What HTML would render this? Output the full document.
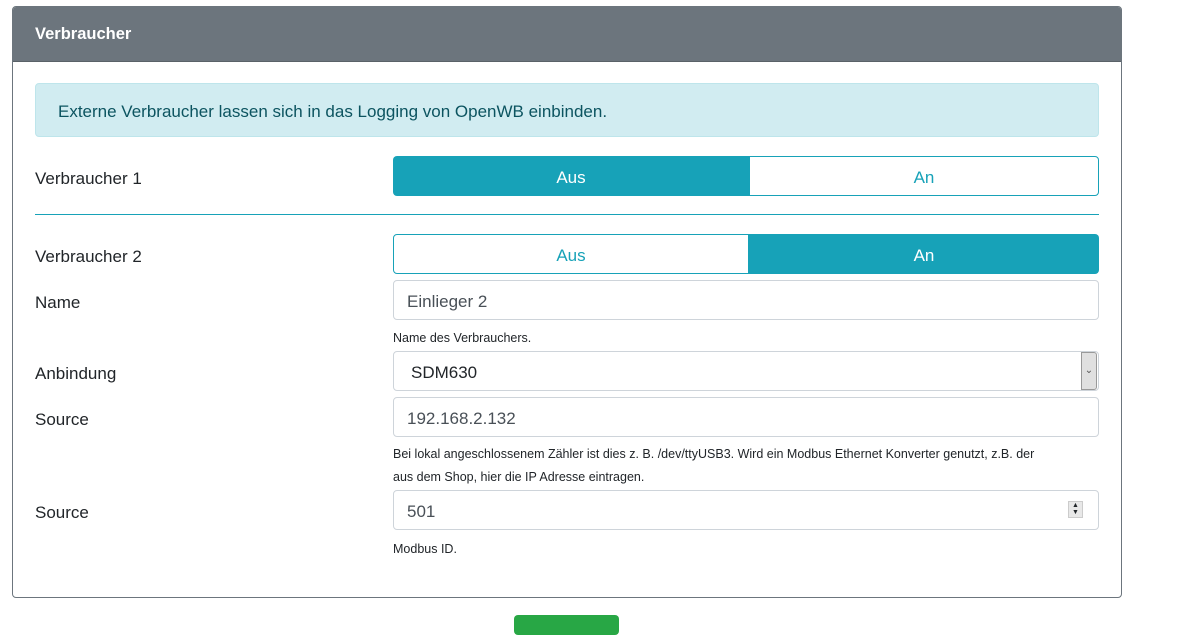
<!DOCTYPE html>
<html><head><style>
body{margin:0;width:1178px;height:627px;background:#fff;font-family:"Liberation Sans",sans-serif;color:#212529;position:relative;overflow:hidden}
.a{position:absolute}
.card{left:12px;top:6px;width:1108px;height:590px;border:1px solid #6c757d;border-radius:4px}
.hdr{left:13px;top:7px;width:1108px;height:54px;background:#6c757d;border-radius:3px 3px 0 0;border-bottom:1px solid #5a6268}
.lbl{font-size:17px;left:35px}
.inp{left:393px;height:40px;border:1px solid #ced4da;border-radius:4px;font-size:17px;line-height:42px;padding-left:13px;box-sizing:border-box;width:706px;color:#495057}
.sm{left:393px;font-size:12.5px;color:#212529}
.btn{height:40px;line-height:43px;text-align:center;font-size:17px;box-sizing:border-box;width:356px}
</style></head><body>
<div class="a card"></div>
<div class="a hdr"></div>
<div class="a" style="left:35px;top:25px;color:#fff;font-weight:bold;font-size:16.5px">Verbraucher</div>
<div class="a" style="left:35px;top:83px;width:1064px;height:54px;background:#d1ecf1;border:1px solid #bee5eb;border-radius:4px;box-sizing:border-box;color:#0c5460;font-size:17px;line-height:56px;padding-left:22px">Externe Verbraucher lassen sich in das Logging von OpenWB einbinden.</div>
<div class="a lbl" style="top:169px">Verbraucher 1</div>
<div class="a btn" style="left:393px;top:156px;background:#17a2b8;color:#fff;border-radius:4px 0 0 4px">Aus</div>
<div class="a btn" style="left:749px;top:156px;width:350px;border:1px solid #17a2b8;color:#17a2b8;border-radius:0 4px 4px 0;line-height:41px">An</div>
<div class="a" style="left:35px;top:214px;width:1064px;height:1px;background:#17a2b8"></div>
<div class="a lbl" style="top:247px">Verbraucher 2</div>
<div class="a btn" style="left:393px;top:234px;border:1px solid #17a2b8;color:#17a2b8;border-radius:4px 0 0 4px;line-height:41px">Aus</div>
<div class="a btn" style="left:749px;top:234px;width:350px;background:#17a2b8;color:#fff;border-radius:0 4px 4px 0">An</div>
<div class="a lbl" style="top:293px">Name</div>
<div class="a inp" style="top:280px">Einlieger 2</div>
<div class="a sm" style="top:331px">Name des Verbrauchers.</div>
<div class="a lbl" style="top:364px">Anbindung</div>
<div class="a inp" style="top:351px;padding-left:17px;color:#212529">SDM630</div>
<div class="a" style="left:1081px;top:352px;width:16px;height:38px;background:#e0e0e0;border:1px solid #999;box-sizing:border-box;border-radius:0 3px 3px 0;font-size:10px;text-align:center;line-height:36px;color:#555">&#8964;</div>
<div class="a lbl" style="top:410px">Source</div>
<div class="a inp" style="top:397px">192.168.2.132</div>
<div class="a sm" style="top:443px;line-height:23px;width:710px">Bei lokal angeschlossenem Zähler ist dies z. B. /dev/ttyUSB3. Wird ein Modbus Ethernet Konverter genutzt, z.B. der<br>aus dem Shop, hier die IP Adresse eintragen.</div>
<div class="a lbl" style="top:503px">Source</div>
<div class="a inp" style="top:490px">501</div>
<div class="a" style="left:1068px;top:501px;width:15px;height:17px;background:#e8e8e8;border:1px solid #ccc;box-sizing:border-box;font-size:7px;line-height:7px;text-align:center">▲<br>▼</div>
<div class="a sm" style="top:542px">Modbus ID.</div>
<div class="a" style="left:514px;top:615px;width:105px;height:20px;background:#28a745;border-radius:4px"></div>
</body></html>
